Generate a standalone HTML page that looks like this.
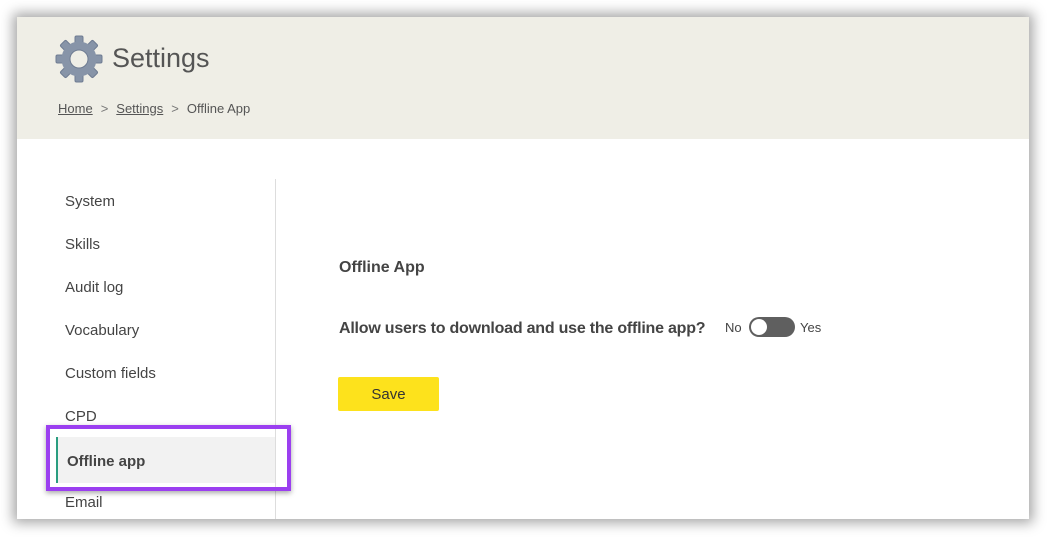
<!DOCTYPE html>
<html><head><meta charset="utf-8"><style>
*{margin:0;padding:0;box-sizing:border-box}
html,body{width:1047px;height:537px;overflow:hidden;background:#fff;font-family:"Liberation Sans",sans-serif;color:#4a4a4a}
#panel{position:absolute;left:17px;top:17px;width:1012px;height:502px;background:#fff;box-shadow:0 0 12px 4px rgba(0,0,0,0.35);overflow:hidden}
#hdr{position:absolute;left:0;top:0;width:1012px;height:122px;background:#efeee6}
#hdr .title{position:absolute;left:95px;top:26px;font-size:27px;color:#555}
#gear{position:absolute;left:38px;top:18px}
.bc{position:absolute;left:41px;top:84px;font-size:13px;color:#555}
.bc u{color:#555}
.bc .sep{margin:0 8px;color:#777}
.nav{position:absolute;left:48px;font-size:15px;color:#444}
#div{position:absolute;left:258px;top:162px;width:1px;height:340px;background:#ddd}
#act{position:absolute;left:39px;top:420px;width:219px;height:46px;background:#f2f2f2;border-left:2px solid #2a9d80}
#act span{position:absolute;left:9px;top:16px;font-size:15px;font-weight:bold;color:#444}
#hl{position:absolute;left:29px;top:408px;width:245px;height:66px;border:4px solid #9b3ff0;box-shadow:0 2px 5px rgba(0,0,0,0.35)}
.h2{position:absolute;left:322px;top:242px;font-size:16px;font-weight:bold;color:#444}
.q{position:absolute;left:322px;top:303px;font-size:16px;font-weight:bold;color:#444;letter-spacing:-0.22px}
.lab{position:absolute;top:303px;font-size:13px;color:#444}
#tg{position:absolute;left:732px;top:300px;width:46px;height:20px;border-radius:10px;background:#5f5f5f}
#tg::after{content:"";position:absolute;left:2px;top:2px;width:16px;height:16px;border-radius:50%;background:#fff}
#save{position:absolute;left:321px;top:360px;width:101px;height:34px;background:#fde21c;border-radius:2px;font-size:15px;color:#333;text-align:center;line-height:36px}
</style></head><body>
<div id="panel">
 <div id="hdr">
  <svg id="gear" width="48" height="48" viewBox="0 0 48 48">
   <g fill="#8794a8" stroke="#6f7c92" stroke-width="1">
    <g transform="translate(24,24)">
     <rect x="-4" y="-23" width="8" height="9" rx="1.5"/>
     <rect x="-4" y="-23" width="8" height="9" rx="1.5" transform="rotate(45)"/>
     <rect x="-4" y="-23" width="8" height="9" rx="1.5" transform="rotate(90)"/>
     <rect x="-4" y="-23" width="8" height="9" rx="1.5" transform="rotate(135)"/>
     <rect x="-4" y="-23" width="8" height="9" rx="1.5" transform="rotate(180)"/>
     <rect x="-4" y="-23" width="8" height="9" rx="1.5" transform="rotate(225)"/>
     <rect x="-4" y="-23" width="8" height="9" rx="1.5" transform="rotate(270)"/>
     <rect x="-4" y="-23" width="8" height="9" rx="1.5" transform="rotate(315)"/>
     <circle r="17.5" stroke="none"/>
     <circle r="9" fill="#efeee6"/>
    </g>
   </g>
  </svg>
  <div class="title">Settings</div>
  <div class="bc"><u>Home</u><span class="sep">&gt;</span><u>Settings</u><span class="sep">&gt;</span>Offline App</div>
 </div>
 <div class="nav" style="top:176px">System</div>
 <div class="nav" style="top:219px">Skills</div>
 <div class="nav" style="top:262px">Audit log</div>
 <div class="nav" style="top:305px">Vocabulary</div>
 <div class="nav" style="top:348px">Custom fields</div>
 <div class="nav" style="top:391px">CPD</div>
 <div id="act"><span>Offline app</span></div>
 <div class="nav" style="top:477px">Email</div>
 <div id="div"></div>
 <div id="hl"></div>
 <div class="h2">Offline App</div>
 <div class="q">Allow users to download and use the offline app?</div>
 <div class="lab" style="left:708px">No</div>
 <div id="tg"></div>
 <div class="lab" style="left:783px">Yes</div>
 <div id="save">Save</div>
</div>
</body></html>
